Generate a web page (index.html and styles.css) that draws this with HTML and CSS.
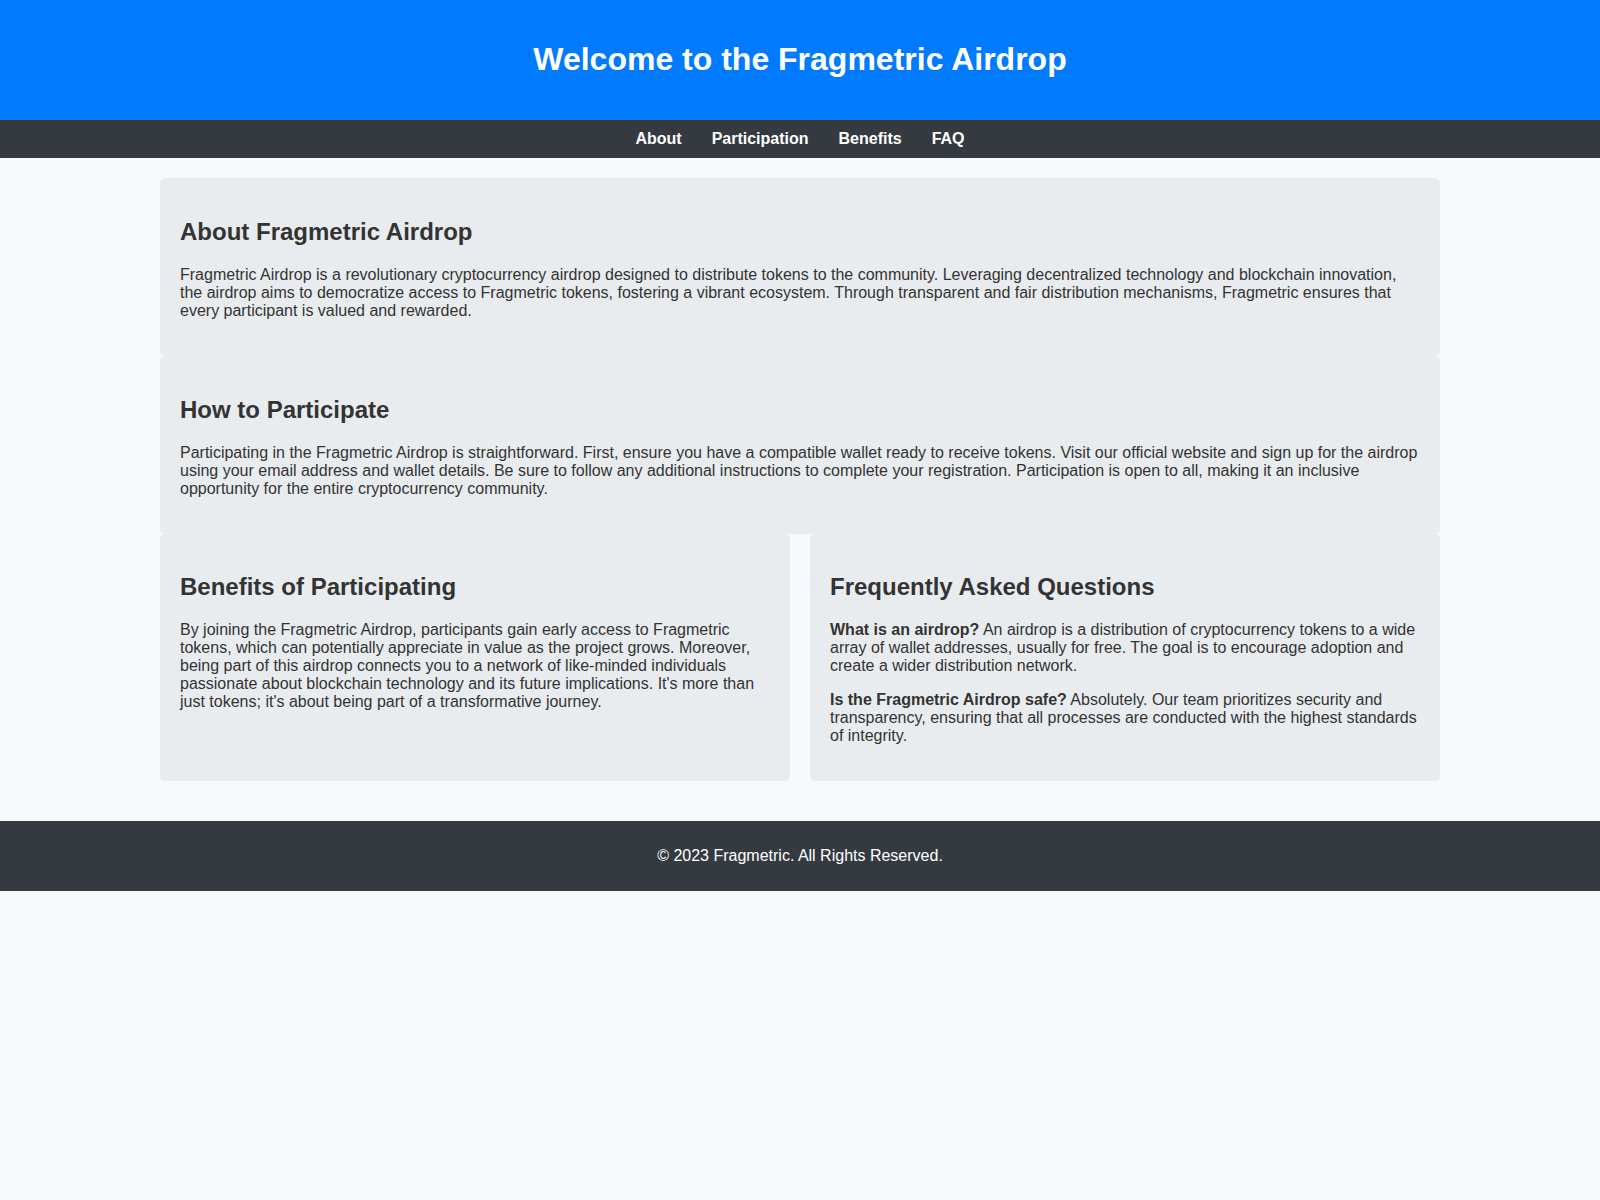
FILE: index.html
```html
<!DOCTYPE html>
<html lang="en">
<head>
    <meta charset="UTF-8">
    <meta name="viewport" content="width=device-width, initial-scale=1.0">
    <title>Fragmetric Airdrop</title>
    <link rel="stylesheet" href="styles.css">
</head>
<body>
    <header class="site-header">
        <h1>Welcome to the Fragmetric Airdrop</h1>
    </header>

    <nav class="site-nav">
        <a href="#about">About</a>
        <a href="#participation">Participation</a>
        <a href="#benefits">Benefits</a>
        <a href="#faq">FAQ</a>
    </nav>

    <main class="content">
        <section class="card wide" id="about">
            <h2>About Fragmetric Airdrop</h2>
            <p>Fragmetric Airdrop is a revolutionary cryptocurrency airdrop designed to distribute tokens to the community. Leveraging decentralized technology and blockchain innovation, the airdrop aims to democratize access to Fragmetric tokens, fostering a vibrant ecosystem. Through transparent and fair distribution mechanisms, Fragmetric ensures that every participant is valued and rewarded.</p>
        </section>

        <section class="card wide" id="participation">
            <h2>How to Participate</h2>
            <p>Participating in the Fragmetric Airdrop is straightforward. First, ensure you have a compatible wallet ready to receive tokens. Visit our official website and sign up for the airdrop using your email address and wallet details. Be sure to follow any additional instructions to complete your registration. Participation is open to all, making it an inclusive opportunity for the entire cryptocurrency community.</p>
        </section>

        <section class="card" id="benefits">
            <h2>Benefits of Participating</h2>
            <p>By joining the Fragmetric Airdrop, participants gain early access to Fragmetric tokens, which can potentially appreciate in value as the project grows. Moreover, being part of this airdrop connects you to a network of like-minded individuals passionate about blockchain technology and its future implications. It's more than just tokens; it's about being part of a transformative journey.</p>
        </section>

        <section class="card" id="faq">
            <h2>Frequently Asked Questions</h2>
            <p><strong>What is an airdrop?</strong> An airdrop is a distribution of cryptocurrency tokens to a wide array of wallet addresses, usually for free. The goal is to encourage adoption and create a wider distribution network.</p>
            <p><strong>Is the Fragmetric Airdrop safe?</strong> Absolutely. Our team prioritizes security and transparency, ensuring that all processes are conducted with the highest standards of integrity.</p>
        </section>
    </main>

    <footer class="site-footer">
        <p>&copy; 2023 Fragmetric. All Rights Reserved.</p>
    </footer>
</body>
</html>
```

FILE: styles.css
```css
body {
    margin: 0;
    font-family: "Liberation Sans", Arial, sans-serif;
    background-color: #f8f9fa;
    color: #333;
}
.site-header {
    background-color: #007bff;
    color: #fff;
    text-align: center;
    padding: 20px;
}
.site-nav {
    background-color: #343a40;
    display: flex;
    justify-content: center;
    padding: 10px 0;
}
.site-nav a {
    color: #fff;
    text-decoration: none;
    font-weight: bold;
    margin: 0 15px;
}
.site-nav a:hover {
    text-decoration: underline;
}
.content {
    max-width: 1280px;
    margin: 0 auto;
    padding: 20px 0 40px;
    display: grid;
    grid-template-columns: 1fr 1fr;
    column-gap: 20px;
}
.card {
    background-color: #e9ecef;
    border-radius: 5px;
    padding: 20px;
}
.card.wide {
    grid-column: 1 / -1;
}
.site-footer {
    background-color: #343a40;
    color: #fff;
    text-align: center;
    padding: 10px 0;
}
```
